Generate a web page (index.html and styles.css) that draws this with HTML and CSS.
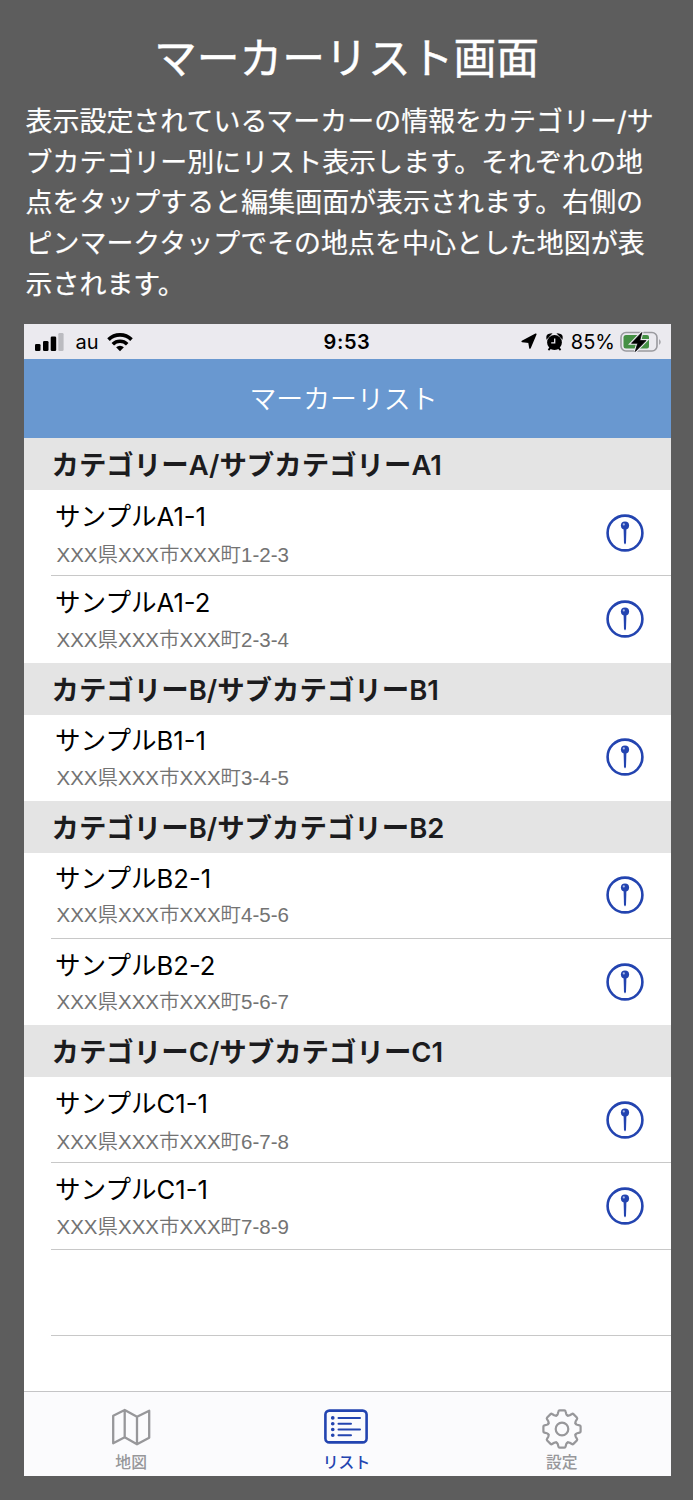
FILE: index.html
```html
<!DOCTYPE html>
<html lang="ja">
<head>
    <meta charset="UTF-8">
    <meta name="viewport" content="width=device-width, initial-scale=1.0">
    <title>マーカーリスト画面</title>
    <link rel="stylesheet" href="styles.css">
</head>
<body>
    <svg class="defs" width="0" height="0">
        <symbol id="pin" viewBox="0 0 38 38">
            <circle cx="19" cy="19" r="17.4" fill="none" stroke="#2344b0" stroke-width="2.6"/>
            <circle cx="19" cy="11.6" r="4.1" fill="#2344b0"/>
            <circle cx="17.8" cy="10.4" r="1.1" fill="#a9b9ea"/>
            <path d="M17.6 15h2.8l-.4 14-1 1.5-1-1.5z" fill="#2344b0"/>
        </symbol>
    </svg>

    <h1>マーカーリスト画面</h1>
    <p class="intro">表示設定されているマーカーの情報をカテゴリー/サ<br>ブカテゴリー別にリスト表示します。それぞれの地<br>点をタップすると編集画面が表示されます。右側の<br>ピンマークタップでその地点を中心とした地図が表<br>示されます。</p>

    <div class="phone">
        <div class="status">
            <div class="status-left">
                <svg width="29" height="20" viewBox="0 0 29 20">
                    <rect x="0" y="12" width="5.5" height="7" rx="1.3"/>
                    <rect x="8" y="9" width="5.5" height="10" rx="1.3"/>
                    <rect x="15.7" y="4.5" width="5.5" height="14.5" rx="1.3"/>
                    <rect x="23.3" y="1" width="5.3" height="18" rx="1.3" fill="#bbbbc0"/>
                </svg>
                <span class="carrier">au</span>
                <svg width="26" height="20" viewBox="0 0 26 20">
                    <g fill="none" stroke="#000" stroke-width="3.6">
                        <path d="M1.5 7.6a16.4 16.4 0 0 1 23 0"/>
                        <path d="M5.8 12.2a10.3 10.3 0 0 1 14.4 0"/>
                    </g>
                    <path d="M9.1 15.3a5.6 5.6 0 0 1 7.8 0L13 19.3z"/>
                </svg>
            </div>
            <div class="time">9:53</div>
            <div class="status-right">
                <svg width="16" height="17" viewBox="0 0 16 17"><path d="M14.8 1.3 1.2 8.5 8 9.3 9 15z" stroke="#000" stroke-width="1.6" stroke-linejoin="round"/></svg>
                <svg class="alarm" width="17" height="18" viewBox="0 0 17 18">
                    <circle cx="8.5" cy="9.5" r="7.4"/>
                    <path d="M1.2 4.6Q1 1.6 4.3 1.3zM15.8 4.6Q16 1.6 12.7 1.3zM2.4 17l2.5-2.5M14.6 17l-2.5-2.5" stroke="#000" stroke-width="1.8"/>
                    <path d="M8.7 5.6v4.3H5.2" fill="none" stroke="#ebeaef" stroke-width="1.3"/>
                </svg>
                <span class="percent">85%</span>
                <svg width="42" height="22" viewBox="0 0 42 22">
                    <rect x="1" y="1.5" width="36" height="18.5" rx="5" fill="none" stroke="#9a9a9f" stroke-width="1.6"/>
                    <path d="M6 4h21q2 0 2 2v9.5q0 2-2 2H6q-2.500 0-2.500-2.500V6.500Q3.500 4 6 4z" fill="#459044"/>
                    <path d="M39.2 8q3 3 0 6z" fill="#9a9a9f"/>
                    <path d="M21.8 1.5 11.5 12.3h6.2L15.3 20.5 26 9.6h-6.2z" stroke="#ebeaef" stroke-width="3"/>
                    <path d="M21.8 1.5 11.5 12.3h6.2L15.3 20.5 26 9.6h-6.2z" stroke="#000" stroke-width=".8" stroke-linejoin="round"/>
                </svg>
            </div>
        </div>
        <div class="nav">マーカーリスト</div>

        <div class="list">
            <h2>カテゴリーA/サブカテゴリーA1</h2>
            <div class="row">
                <div class="text"><div class="name">サンプルA1-1</div><div class="address">XXX県XXX市XXX町1-2-3</div></div>
                <svg class="pin"><use href="#pin"/></svg>
            </div>
            <div class="row snug">
                <div class="text"><div class="name">サンプルA1-2</div><div class="address">XXX県XXX市XXX町2-3-4</div></div>
                <svg class="pin"><use href="#pin"/></svg>
            </div>
            <h2>カテゴリーB/サブカテゴリーB1</h2>
            <div class="row snug">
                <div class="text"><div class="name">サンプルB1-1</div><div class="address">XXX県XXX市XXX町3-4-5</div></div>
                <svg class="pin"><use href="#pin"/></svg>
            </div>
            <h2>カテゴリーB/サブカテゴリーB2</h2>
            <div class="row tight">
                <div class="text"><div class="name">サンプルB2-1</div><div class="address">XXX県XXX市XXX町4-5-6</div></div>
                <svg class="pin"><use href="#pin"/></svg>
            </div>
            <div class="row tight">
                <div class="text"><div class="name">サンプルB2-2</div><div class="address">XXX県XXX市XXX町5-6-7</div></div>
                <svg class="pin"><use href="#pin"/></svg>
            </div>
            <h2>カテゴリーC/サブカテゴリーC1</h2>
            <div class="row">
                <div class="text"><div class="name">サンプルC1-1</div><div class="address">XXX県XXX市XXX町6-7-8</div></div>
                <svg class="pin"><use href="#pin"/></svg>
            </div>
            <div class="row snug">
                <div class="text"><div class="name">サンプルC1-1</div><div class="address">XXX県XXX市XXX町7-8-9</div></div>
                <svg class="pin"><use href="#pin"/></svg>
            </div>
            <div class="row"></div>
        </div>

        <div class="tabs">
            <div class="tab">
                <svg width="44" height="44" viewBox="0 0 44 44" fill="none" stroke="#97979a" stroke-width="2.3" stroke-linejoin="round">
                    <path d="M4.2 8.7 15.7 3 28 9.7 40.2 3.7v27L28 37.3 15.7 30.3 4.2 36.3zM15.7 3v27.3M28 9.7v27.6"/>
                </svg>
                <span>地図</span>
            </div>
            <div class="tab active">
                <svg width="44" height="44" viewBox="0 0 44 44" fill="none" stroke="#2344b0" stroke-linecap="round">
                    <rect x="1.4" y="3.6" width="41.2" height="31.8" rx="4" stroke-width="2.6"/>
                    <path d="M14.5 10.9h21.5M14.5 16.7h12.5M14.5 22.5h21.5M14.5 28.3h12.5" stroke-width="2"/>
                    <path d="M8.7 10.9h.1M8.7 16.7h.1M8.7 22.5h.1M8.7 28.3h.1" stroke-width="3.6"/>
                </svg>
                <span>リスト</span>
            </div>
            <div class="tab">
                <svg width="44" height="44" viewBox="-22 -22 44 44" fill="none" stroke="#97979a" stroke-width="2.2" stroke-linecap="round">
                    <g id="cog">
                        <path id="cog-tooth" d="M-5.6-13.5Q-4.6-14-4.2-15.2L-3.6-17.6Q-3.4-18.6-2.4-18.6H2.4Q3.4-18.6 3.6-17.6L4.2-15.2Q4.6-14 5.6-13.5"/>
                        <use href="#cog-tooth" transform="rotate(45)"/>
                        <use href="#cog-tooth" transform="rotate(90)"/>
                        <use href="#cog-tooth" transform="rotate(135)"/>
                    </g>
                    <use href="#cog" transform="rotate(180)"/>
                    <circle r="6.3"/>
                </svg>
                <span>設定</span>
            </div>
        </div>
    </div>
</body>
</html>
```
FILE: styles.css
```css
body {
    margin: 0;
    height: 1500px;
    overflow: hidden;
    background: #5d5d5d;
    font-family: Inter, "Noto Sans CJK JP", sans-serif;
}

.defs {
    position: absolute;
}

h1 {
    margin: 0;
    padding-top: 29px;
    height: 73px;
    line-height: 60px;
    text-align: center;
    font-size: 42.8px;
    font-weight: 400;
    color: #fff;
    -webkit-text-stroke: 0.4px #fff;
    white-space: nowrap;
}

.intro {
    margin: 0 0 0 25.5px;
    height: 222px;
    font-size: 26.98px;
    font-weight: 400;
    line-height: 40.7px;
    color: #fff;
    -webkit-text-stroke: 0.2px #fff;
    white-space: nowrap;
}

.phone {
    display: flex;
    flex-direction: column;
    width: 647px;
    height: 1152px;
    margin-left: 23.5px;
    background: #fff;
}

.status {
    display: grid;
    grid-template-columns: 1fr auto 1fr;
    align-items: center;
    height: 35px;
    background: #ebeaef;
    font-size: 20px;
}

.status-left, .status-right {
    display: flex;
    align-items: center;
}

.status-left {
    padding-left: 11px;
}

.carrier {
    margin: 0 8px 0 12px;
}

.time {
    font-weight: 600;
    letter-spacing: 0.6px;
}

.status-right {
    justify-content: flex-end;
    padding-right: 9px;
}

.alarm {
    margin: 0 8px 0 9px;
}

.percent {
    margin-right: 4.5px;
}

.nav {
    box-sizing: border-box;
    height: 79.4px;
    padding-right: 7px;
    line-height: 80px;
    background: #6998d0;
    color: #fff;
    text-align: center;
    font-size: 26.9px;
    font-weight: 350;
}

.list {
    flex: 1;
}

h2 {
    margin: 0;
    padding-left: 28px;
    height: 51.75px;
    line-height: 55px;
    background: #e4e4e4;
    color: #1c1c1e;
    font-size: 27.45px;
    font-weight: 600;
    white-space: nowrap;
}

.row {
    display: flex;
    justify-content: space-between;
    box-sizing: border-box;
    height: 86.35px;
    margin-left: 27px;
    border-bottom: 1px solid #c8c8c8;
}

.row:has(+ h2) {
    border-bottom-color: transparent;
}

.name {
    padding: 7.5px 0 0 4.5px;
    height: 38px;
    line-height: 38px;
    font-size: 25.6px;
    font-weight: 400;
    color: #000;
}

.address {
    padding: 0.5px 0 0 6px;
    line-height: 38px;
    font-family: "Liberation Sans", "Noto Sans CJK JP", sans-serif;
    font-size: 20.5px;
    font-weight: 350;
    color: #737373;
}

.snug .address {
    margin-top: -1.5px;
}

.tight .address {
    margin-top: -2.5px;
}

.pin {
    width: 38px;
    height: 38px;
    margin: 23.5px 27px 0 0;
}

.tabs {
    display: flex;
    box-sizing: border-box;
    height: 85px;
    padding-right: 1px;
    border-top: 1px solid #c4c4c6;
    background: #fbfbfd;
}

.tab {
    flex: 1;
    display: flex;
    flex-direction: column;
    align-items: center;
    padding-top: 15px;
    color: #97979a;
    font-size: 15.8px;
    font-weight: 500;
}

.tab svg {
    flex-shrink: 0;
}

.tab span {
    line-height: 24px;
}

.active {
    color: #2344b0;
}
```
